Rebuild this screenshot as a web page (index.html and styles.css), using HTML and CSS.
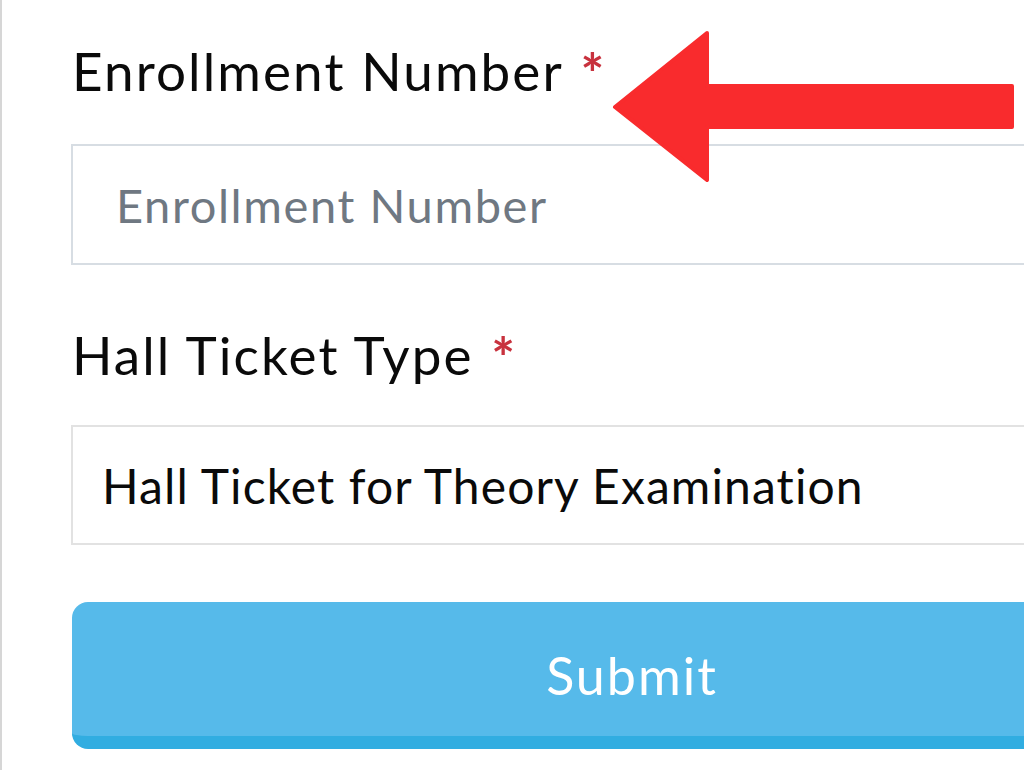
FILE: index.html
```html
<!DOCTYPE html>
<html lang="en">
<head>
<meta charset="utf-8">
<title>Hall Ticket</title>
<link rel="stylesheet" href="styles.css">
</head>
<body>
<div class="page">
  <form class="form">
    <div class="field field-first">
      <label class="label" for="enr">Enrollment Number <span class="req">*</span></label>
      <div class="input input-text" id="enr"><span class="placeholder">Enrollment Number</span></div>
    </div>
    <div class="field">
      <label class="label" for="typ">Hall Ticket Type <span class="req">*</span></label>
      <div class="input input-select" id="typ"><span class="value">Hall Ticket for Theory Examination</span></div>
    </div>
    <button type="button" class="submit">Submit</button>
  </form>
  <svg class="arrow" width="420" height="170" viewBox="0 0 420 170" aria-hidden="true">
    <polygon points="405,58 100,58 100,5 8,79 100,152 100,99 405,99" fill="#f92b2d" stroke="#f92b2d" stroke-width="4" stroke-linejoin="round"/>
  </svg>
</div>
</body>
</html>
```
FILE: styles.css
```css
html, body {
  margin: 0;
  padding: 0;
  background: #ffffff;
  overflow: hidden;
}
body {
  font-family: Lato, "Open Sans", sans-serif;
  color: #0a0a0a;
}
.page {
  position: relative;
  height: 770px;
  width: 1300px;
  border-left: 2px solid #d6d6d6;
  box-sizing: border-box;
  padding: 39px 0 0 69px;
  overflow: hidden;
}
.form {
  width: 1120px;
  display: flex;
  flex-direction: column;
}
.field {
  display: flex;
  flex-direction: column;
  margin-bottom: 57px;
}
.label {
  font-size: 53px;
  line-height: 64px;
  height: 64px;
  margin-bottom: 41px;
  margin-left: 1px;
  letter-spacing: 2.1px;
}
.req {
  color: #c8323e;
  font-size: 56px;
  font-weight: 700;
  vertical-align: -3px;
  margin-left: 2px;
}
.input {
  box-sizing: border-box;
  border: 2px solid #d7dde3;
  display: flex;
  align-items: center;
  background: #fff;
}
.input-text {
  height: 121px;
  padding-left: 43px;
}
.placeholder {
  font-size: 47px;
  color: #6f7882;
  letter-spacing: 1.6px;
}
.field + .field .label {
  margin-bottom: 38px;
}
.field + .field {
  margin-top: 1px;
}
.input-select {
  height: 120px;
  border-color: #e2e2e2;
  padding-left: 29px;
}
.value {
  font-size: 48px;
  color: #0a0a0a;
  letter-spacing: 1.1px;
}
.submit {
  box-sizing: border-box;
  height: 147px;
  width: 100%;
  border: none;
  border-bottom: 13px solid #31ade1;
  border-radius: 16px;
  background: #56baea;
  color: #ffffff;
  font-family: Lato, "Open Sans", sans-serif;
  font-size: 52px;
  padding: 12px 0 0 0;
  margin-left: 1px;
  margin-top: 0;
  letter-spacing: 2px;
}
.arrow {
  position: absolute;
  left: 605px;
  top: 28px;
}
```
